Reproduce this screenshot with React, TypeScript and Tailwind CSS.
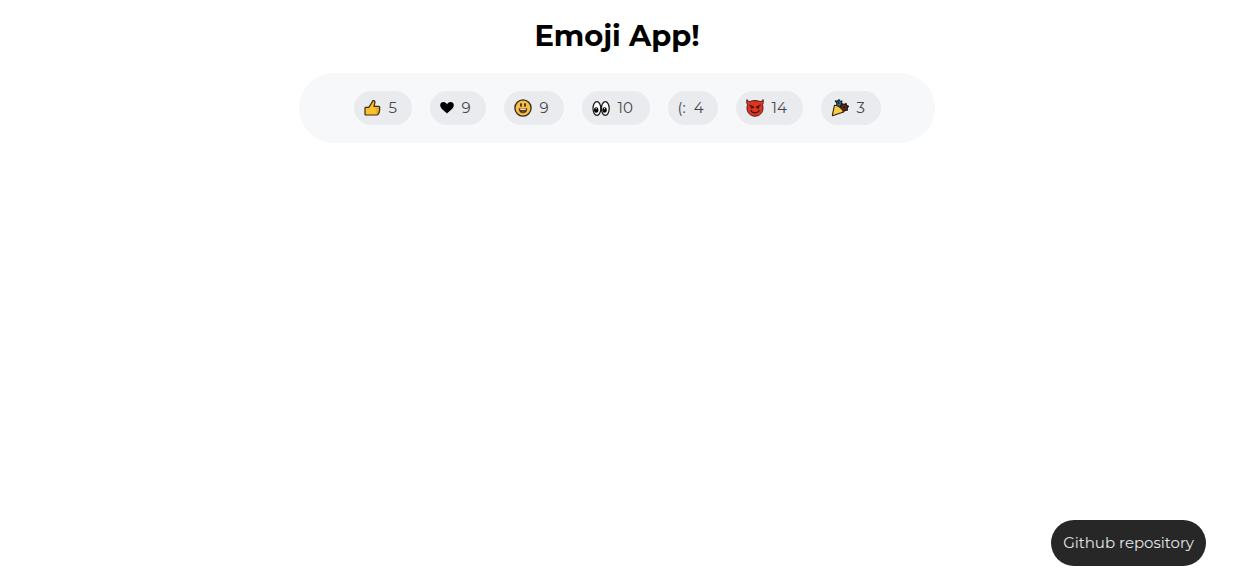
import type { ReactNode } from "react";

type Reaction = {
  label: string;
  icon: ReactNode;
  votes: number;
  width: string;
};

function ThumbsUp() {
  return (
    <svg viewBox="0 0 17 18" className="h-[18px] w-[17px] shrink-0" aria-hidden="true">
      <path
        d="M1 9.2c0-.5.3-.8.8-.8h3L8.300 2.900c.2-1 .7-1.600 1.500-1.300 1.300.5 1.200 2.300.8 3.400L10 7.300h4.300c1.600 0 1.900 1.700.9 2.400.9.700.7 1.900-.1 2.300.5.800.2 1.800-.6 2.100.2 1.100-.5 1.900-1.700 1.900H1.800c-.5 0-.8-.3-.8-.8z"
        fill="#fbc02e"
        stroke="#3b2a10"
        strokeWidth="1.200"
        strokeLinejoin="round"
      />
      <path d="M11.500 9.700h3.300M11.800 12h3M11.700 14.100h2.500" stroke="#b77a18" strokeWidth=".6" />
    </svg>
  );
}

function Heart() {
  return (
    <svg viewBox="0 0 14 14" className="h-3.5 w-3.5 shrink-0" aria-hidden="true">
      <path
        d="M7 12.600C5.600 10.800.2 8 .2 4.100.2 2.100 1.700.9 3.500.9 5.200.9 6.400 1.900 7 3.300 7.600 1.900 8.800.9 10.500.9c1.800 0 3.300 1.200 3.300 3.200C13.800 8 8.400 10.800 7 12.600z"
        fill="#000"
      />
    </svg>
  );
}

function Grin() {
  return (
    <svg viewBox="0 0 18 18" className="h-[18px] w-[18px] shrink-0" aria-hidden="true">
      <circle cx="9" cy="9" r="8.100" fill="#f3bf48" stroke="#352710" strokeWidth="1.300" />
      <ellipse cx="7" cy="6" rx=".9" ry="1.900" fill="#2b2114" />
      <ellipse cx="11" cy="6" rx=".9" ry="1.900" fill="#2b2114" />
      <path d="M4.800 9.300h8.400c0 3.400-1.600 5-4.200 5s-4.200-1.600-4.200-5z" fill="#4a2c14" />
      <path d="M6.200 9.500h5.600v1.600H6.200z" fill="#f0dcc0" />
      <path d="M7 13c1.200-.9 2.800-.9 4 0-1.200.8-2.800.8-4 0z" fill="#b9503c" />
    </svg>
  );
}

function Eyes() {
  return (
    <svg viewBox="0 0 18 18" className="h-[18px] w-[18px] shrink-0" aria-hidden="true">
      <ellipse cx="4.900" cy="9.500" rx="3.900" ry="6.900" fill="#fff" stroke="#171717" strokeWidth="1.200" />
      <ellipse cx="13.300" cy="9.500" rx="3.900" ry="6.900" fill="#fff" stroke="#171717" strokeWidth="1.200" />
      <ellipse cx="4.200" cy="11" rx="2.200" ry="2.700" fill="#000" />
      <ellipse cx="12.600" cy="11" rx="2.200" ry="2.700" fill="#000" />
      <circle cx="4.200" cy="9.700" r=".6" fill="#fff" />
      <circle cx="12.600" cy="9.700" r=".6" fill="#fff" />
    </svg>
  );
}

function Devil() {
  return (
    <svg viewBox="0 0 18 18" className="h-[18px] w-[18px] shrink-0" aria-hidden="true">
      <path
        d="M1 .6c.6 1.500 1.700 2 3.200 1.800C7 1.300 11 1.300 13.800 2.400 15.300 2.600 16.400 2.100 17 .6c.5 2 .3 3.800-.5 5.200.3 1 .5 2 .5 3.200 0 4.700-3.400 8.200-8 8.200S1 13.700 1 9c0-1.200.2-2.200.5-3.200C.7 4.400.5 2.600 1 .6z"
        fill="#df3520"
        stroke="#4a1b14"
        strokeWidth="1"
        strokeLinejoin="round"
      />
      <path d="M3.800 6.200l3.900 2.100M14.200 6.200l-3.900 2.100" stroke="#35120d" strokeWidth="1.100" strokeLinecap="round" />
      <ellipse cx="5.800" cy="8.600" rx="1" ry="1.200" fill="#35120d" />
      <ellipse cx="12.200" cy="8.600" rx="1" ry="1.200" fill="#35120d" />
      <path d="M4.800 11.700c1.900 2.800 6.500 2.800 8.400 0" fill="none" stroke="#35120d" strokeWidth="1.200" strokeLinecap="round" />
    </svg>
  );
}

function PartyPopper() {
  return (
    <svg viewBox="0 0 18 18" className="h-[18px] w-[18px] shrink-0" aria-hidden="true">
      <path
        d="M4.300 1.900l2.100.2L8 .6l1.200 1.700L11 2l-.5 2.200 1 1.800-2.600 1.900-3.300-1.500.3-2z"
        fill="#287083"
        stroke="#10252c"
        strokeWidth="1.100"
        strokeLinejoin="round"
      />
      <path
        d="M9.400 7.400l1.800-2.700 2.100.8 1.700-1 .5 1.900 2 .9-1.300 1.600.1 2.300-2.100.1-1.800 1.400-1.700-2z"
        fill="#692719"
        stroke="#23100b"
        strokeWidth="1.200"
        strokeLinejoin="round"
      />
      <path d="M7.300 2.900l.8 2M12.300 8.100l2 .5" stroke="#111" strokeWidth="1.100" />
      <path
        d="M3.500 6.200c3.200-.1 8.300 3.600 9 6.900L2.200 16.600c-.6.200-1-.2-.8-.8z"
        fill="#f9ca43"
        stroke="#2e2410"
        strokeWidth="1.100"
        strokeLinejoin="round"
      />
    </svg>
  );
}

const reactions: Reaction[] = [
  { label: "Thumbs up", icon: <ThumbsUp />, votes: 5, width: "w-[58px]" },
  { label: "Heart", icon: <Heart />, votes: 9, width: "w-14" },
  { label: "Grin", icon: <Grin />, votes: 9, width: "w-15" },
  { label: "Eyes", icon: <Eyes />, votes: 10, width: "w-17" },
  { label: "Smiley", icon: <span>(:</span>, votes: 4, width: "w-[50px]" },
  { label: "Devil", icon: <Devil />, votes: 14, width: "w-[67px]" },
  { label: "Party popper", icon: <PartyPopper />, votes: 3, width: "w-15" },
];

function ReactionButton({ label, icon, votes, width }: Reaction) {
  return (
    <button
      type="button"
      aria-label={`${label} ${votes}`}
      className={`flex h-[34px] shrink-0 cursor-pointer items-center gap-2 rounded-full bg-[#e9ebee] pl-2.5 text-[15px] leading-5 text-[#45474b] ${width}`}
    >
      {icon}
      <span>{votes}</span>
    </button>
  );
}

export default function App() {
  return (
    <div className="min-h-screen bg-white px-4 pt-4 font-['Montserrat','Inter',sans-serif] text-black">
      <main className="flex flex-col items-center gap-[17px]">
        <h1 className="text-[29px] leading-10 font-bold">Emoji App!</h1>
        <section
          aria-label="Reactions"
          className="flex w-full max-w-[636px] flex-wrap justify-center gap-[18px] rounded-[36px] bg-[#f7f8fa] px-6 py-[18px]"
        >
          {reactions.map((reaction) => (
            <ReactionButton key={reaction.label} {...reaction} />
          ))}
        </section>
      </main>
      <a
        href="#repository"
        className="fixed right-7 bottom-[22px] flex h-[46px] items-center rounded-full bg-[#272727] px-3 text-[15px] text-[#e6e6e6]"
      >
        Github repository
      </a>
    </div>
  );
}
